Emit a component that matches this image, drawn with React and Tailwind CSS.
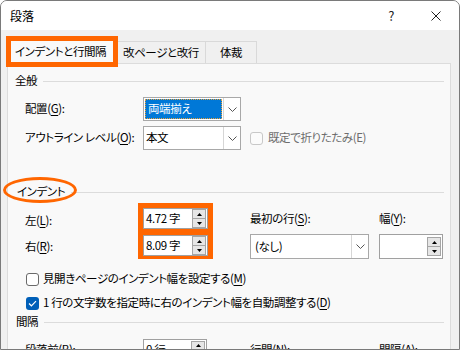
import React from 'react';

function U({ children }) {
  return <span className="underline underline-offset-[2px] decoration-1">{children}</span>;
}

function Chevron() {
  return (
    <svg width="9" height="5" viewBox="0 0 9 5" fill="none">
      <path d="M0.5 0.5 L4.5 4.5 L8.5 0.5" stroke="#555" strokeWidth="1" />
    </svg>
  );
}

function SpinButtons() {
  return (
    <div className="flex flex-col w-[14px] h-[19px] ml-auto mr-[1px] border border-[#a5a5a5] bg-[#e6e6e6]">
      <div className="flex-1 flex items-center justify-center border-b border-[#a5a5a5]">
        <svg width="5" height="3" viewBox="0 0 5 3"><path d="M2.5 0 L5 3 L0 3Z" fill="#000" /></svg>
      </div>
      <div className="flex-1 flex items-center justify-center">
        <svg width="5" height="3" viewBox="0 0 5 3"><path d="M0 0 L5 0 L2.5 3Z" fill="#000" /></svg>
      </div>
    </div>
  );
}

function Spinner({ value, className }) {
  return (
    <div className={'flex items-center border border-[#a0a0a0] bg-white pl-[2px] ' + className}>
      <span>{value}</span>
      <SpinButtons />
    </div>
  );
}

function Section({ title, className = '' }) {
  return (
    <div className={'flex items-center ' + className}>
      <span>{title}</span>
      <div className="flex-1 h-px bg-[#dcdcdc] ml-[6px]" />
    </div>
  );
}

function Checkbox({ checked, disabled }) {
  if (checked) {
    return (
      <div className="w-[13px] h-[13px] rounded-[3px] bg-[#005fb8] flex items-center justify-center">
        <svg width="9" height="7" viewBox="0 0 9 7" fill="none">
          <path d="M1 3.5 L3.4 5.8 L8 1.2" stroke="#fff" strokeWidth="1.2" />
        </svg>
      </div>
    );
  }
  return (
    <div
      className={
        'w-[13px] h-[13px] rounded-[3px] border ' +
        (disabled ? 'border-[#c8c8c8] bg-[#fbfbfb]' : 'border-[#6a6a6a] bg-white')
      }
    />
  );
}

export default function App() {
  return (
    <div className="w-[460px] h-[350px] overflow-hidden whitespace-nowrap bg-[#f0f0f0] border border-[#7a7a7a] rounded-t-[7px] font-['Noto_Sans_CJK_JP',sans-serif] [font-feature-settings:'palt'] text-[11.5px] tracking-[-0.4px] leading-none text-black">
      {/* title bar */}
      <div className="h-[29px] bg-white flex items-center pl-[9px]">
        <span className="text-[12px] tracking-normal">段落</span>
        <span className="ml-auto text-[13px] text-[#222]">?</span>
        <svg className="ml-[37px] mr-[18px]" width="10" height="10" viewBox="0 0 10 10" fill="none">
          <path d="M0.5 0.5 L9.5 9.5 M9.5 0.5 L0.5 9.5" stroke="#222" strokeWidth="1" />
        </svg>
      </div>

      {/* tabs */}
      <div className="flex items-end h-[33px] pl-[5px]">
        <div className="relative z-10 -mb-[4px] h-[31px] w-[112px] border-[5px] border-[#ff6600] bg-[#f9f9f9] flex items-center pl-[4px]">
          インデントと行間隔
        </div>
        <div className="h-[22px] w-[88px] border-t border-r border-[#d9d9d9] flex items-center pl-[5px]">
          改ページと改行
        </div>
        <div className="h-[22px] w-[51px] border-t border-r border-[#d9d9d9] flex items-center justify-center">
          体裁
        </div>
      </div>

      {/* panel */}
      <div className="ml-[6px] mr-[8px] h-[300px] border border-[#dcdcdc] bg-[#f9f9f9] pl-[7px] pr-[6px]">
        <Section title="全般" className="h-[18px] mt-[8px]" />

        <div className="flex items-center h-[24px] mt-[7px] pl-[10px]">
          <span className="w-[118px]">配置(<U>G</U>):</span>
          <div className="flex h-[24px] w-[98px] border border-[#a8a8a8] bg-white">
            <div className="flex-1 p-[1px]">
              <div className="h-full bg-[#0078d7] text-white flex items-center pl-[2px] border border-dotted border-[#e9a13b]">
                両端揃え
              </div>
            </div>
            <div className="w-[17px] border-l border-[#d6d6d6] flex items-center justify-center">
              <Chevron />
            </div>
          </div>
        </div>

        <div className="flex items-center h-[24px] mt-[5px] pl-[10px]">
          <span className="w-[118px]">アウトライン レベル(<U>O</U>):</span>
          <div className="flex h-[24px] w-[98px] border border-[#a8a8a8] bg-white">
            <div className="flex-1 flex items-center pl-[2px]">本文</div>
            <div className="w-[17px] border-l border-[#d6d6d6] flex items-center justify-center">
              <Chevron />
            </div>
          </div>
          <div className="ml-[9px]">
            <Checkbox disabled />
          </div>
          <span className="ml-[5px] text-[#6d6d6d]">既定で折りたたみ(E)</span>
        </div>

        <div className="relative">
          <Section title="インデント" className="h-[18px] mt-[33px] pl-[2px]" />
          <div className="absolute left-[-12px] top-[-6px] w-[74px] h-[26px] rounded-[50%] border-[3px] border-[#ff6600]" />
        </div>

        <div className="flex mt-[2px] pl-[10px]">
          <div className="w-[113px] pt-[5px] flex flex-col">
            <div className="h-[26px] flex items-center">左(<U>L</U>):</div>
            <div className="h-[26px] flex items-center">右(<U>R</U>):</div>
          </div>
          <div className="w-[75px] h-[56px] bg-[#ff6600] px-[5px] pt-[5px] pb-[3px] flex flex-col gap-[6px]">
            <Spinner value="4.72 字" className="h-[21px] w-[65px]" />
            <Spinner value="8.09 字" className="h-[21px] w-[65px]" />
          </div>
          <div className="ml-[37px] w-[119px] flex flex-col">
            <div className="h-[31px] flex items-center">最初の行(<U>S</U>):</div>
            <div className="flex h-[25px] border border-[#a8a8a8] bg-white">
              <div className="flex-1 flex items-center pl-[4px]">(なし)</div>
              <div className="w-[17px] border-l border-[#d6d6d6] flex items-center justify-center">
                <Chevron />
              </div>
            </div>
          </div>
          <div className="ml-[10px] w-[64px] flex flex-col">
            <div className="h-[31px] flex items-center">幅(<U>Y</U>):</div>
            <Spinner value="" className="h-[25px] w-[64px]" />
          </div>
        </div>

        <div className="flex items-center h-[22px] mt-[8px] pl-[11px]">
          <Checkbox />
          <span className="ml-[4px]">見開きページのインデント幅を設定する(<U>M</U>)</span>
        </div>
        <div className="flex items-center h-[22px] mt-[2px] pl-[11px]">
          <Checkbox checked />
          <span className="ml-[4px]">1 行の文字数を指定時に右のインデント幅を自動調整する(<U>D</U>)</span>
        </div>

        <Section title="間隔" className="h-[16px] pl-[1px]" />

        <div className="flex items-center h-[22px] mt-[9px] pl-[10px]">
          <span className="w-[118px]">段落前(<U>B</U>):</span>
          <Spinner value="0 行" className="h-[22px] w-[64px]" />
          <span className="ml-[43px] w-[129px]">行間(<U>N</U>):</span>
          <span>間隔(<U>A</U>):</span>
        </div>
      </div>
    </div>
  );
}
